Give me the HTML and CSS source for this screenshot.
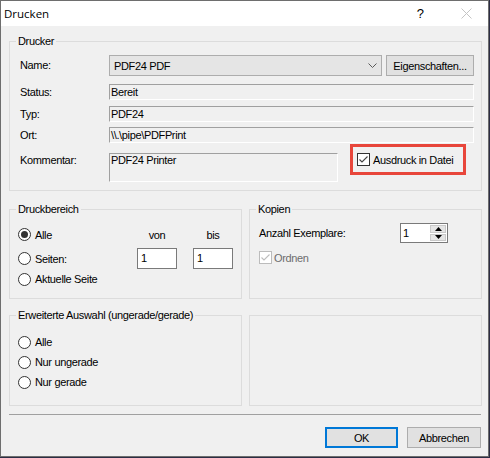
FILE: index.html
```html
<!DOCTYPE html>
<html lang="de">
<head>
<meta charset="utf-8">
<title>Drucken</title>
<link rel="stylesheet" href="styles.css">
</head>
<body>
<div class="window">
  <div class="titlebar">
    <span class="title">Drucken</span>
    <span class="help">?</span>
    <svg class="close" width="11" height="11" viewBox="0 0 11 11">
      <path d="M0.5 0.5 L10.5 10.5 M10.5 0.5 L0.5 10.5" stroke="#c4c4c4" stroke-width="1" fill="none"/>
    </svg>
  </div>

  <div class="client">
    <fieldset class="group printer">
      <legend>Drucker</legend>
      <div class="printer-body">
        <div class="row row-name">
          <span class="lbl">Name:</span>
          <div class="combo">
            <span class="combo-text">PDF24 PDF</span>
            <svg class="chevron" width="9" height="5" viewBox="0 0 9 5">
              <path d="M0.5 0.5 L4.5 4.5 L8.5 0.5" stroke="#5a5a5a" stroke-width="1" fill="none"/>
            </svg>
          </div>
          <button class="btn props">Eigenschaften...</button>
        </div>
        <div class="row row-status">
          <span class="lbl">Status:</span>
          <div class="field">Bereit</div>
        </div>
        <div class="row row-type">
          <span class="lbl">Typ:</span>
          <div class="field">PDF24</div>
        </div>
        <div class="row row-where">
          <span class="lbl">Ort:</span>
          <div class="field">\\.\pipe\PDFPrint</div>
        </div>
        <div class="row row-comment">
          <span class="lbl lbl-comment">Kommentar:</span>
          <div class="field comment">PDF24 Printer</div>
          <div class="highlight">
            <span class="check">
              <svg width="11" height="11" viewBox="0 0 11 11"><path d="M1.5 5.5 L4 8 L9.5 2.5" stroke="#444" stroke-width="1.1" fill="none"/></svg>
            </span>
            <span>Ausdruck in Datei</span>
          </div>
        </div>
      </div>
    </fieldset>

    <div class="group-row row-mid">
      <fieldset class="group range">
        <legend>Druckbereich</legend>
        <div class="range-body">
          <span class="radio"><span class="dot on"></span>Alle</span>
          <span class="col-head">von</span>
          <span class="col-head">bis</span>
          <span class="radio end"><span class="dot"></span>Seiten:</span>
          <span class="num end">1</span>
          <span class="num end">1</span>
          <span class="radio"><span class="dot"></span>Aktuelle Seite</span>
        </div>
      </fieldset>
      <fieldset class="group copies">
        <legend>Kopien</legend>
        <div class="copies-body">
          <div class="copies-row">
            <span class="copies-lbl">Anzahl Exemplare:</span>
            <div class="spin">
              <span class="spin-val">1</span>
              <span class="spin-btns">
                <span class="spin-btn"><svg width="7" height="4" viewBox="0 0 7 4"><path d="M3.5 0 L7 4 L0 4 Z" fill="#000"/></svg></span>
                <span class="spin-btn"><svg width="7" height="4" viewBox="0 0 7 4"><path d="M0 0 L7 0 L3.5 4 Z" fill="#000"/></svg></span>
              </span>
            </div>
          </div>
          <div class="collate">
            <span class="check disabled">
              <svg width="11" height="11" viewBox="0 0 11 11"><path d="M1.5 5.5 L4 8 L9.5 2.5" stroke="#bdbdbd" stroke-width="1.1" fill="none"/></svg>
            </span>
            <span>Ordnen</span>
          </div>
        </div>
      </fieldset>
    </div>

    <div class="group-row row-low">
      <fieldset class="group parity">
        <legend>Erweiterte Auswahl (ungerade/gerade)</legend>
        <div class="parity-body">
          <span class="radio"><span class="dot"></span>Alle</span>
          <span class="radio"><span class="dot"></span>Nur ungerade</span>
          <span class="radio"><span class="dot"></span>Nur gerade</span>
        </div>
      </fieldset>
      <fieldset class="group blank"></fieldset>
    </div>

    <div class="separator"></div>

    <div class="buttons">
      <button class="btn default">OK</button>
      <button class="btn cancel">Abbrechen</button>
    </div>
  </div>
</div>
</body>
</html>
```

FILE: styles.css
```css
html, body {
  margin: 0;
  padding: 0;
}

body {
  width: 490px;
  height: 458px;
  overflow: hidden;
  background: #2c2d44;
  font-family: "Liberation Sans", Arial, sans-serif;
  font-size: 11px;
  letter-spacing: -0.35px;
  color: #000;
}

.window {
  width: 489px;
  height: 457px;
  box-sizing: border-box;
  border: 1px solid #6e6e6e;
  background: #f0f0f0;
  display: flex;
  flex-direction: column;
  overflow: hidden;
}

/* title bar */
.titlebar {
  height: 25px;
  flex: none;
  background: #fff;
  display: flex;
  align-items: center;
  padding-left: 3px;
}

.title {
  flex: 1;
  font-family: "Segoe UI", "Open Sans", "Noto Sans", sans-serif;
  font-size: 11.5px;
  letter-spacing: 0;
}

.help {
  font-family: "Segoe UI", "Liberation Sans", sans-serif;
  font-size: 13px;
  letter-spacing: 0;
  margin-right: 37px;
}

.close {
  margin-right: 16px;
  display: block;
}

/* client area */
.client {
  flex: 1;
  padding: 0 6px 0 8px;
  display: flex;
  flex-direction: column;
}

fieldset.group {
  margin: 0;
  padding: 0;
  border: 1px solid #dcdcdc;
  min-width: 0;
  flex: none;
}

fieldset.group legend {
  margin-left: 6px;
  padding: 0 2px;
  line-height: 13px;
  height: 13px;
}

/* printer group */
fieldset.printer {
  margin-top: 9px;
}

.printer-body {
  padding: 7px 7px 8px 10px;
  display: flex;
  flex-direction: column;
}

.row {
  display: flex;
  align-items: center;
}

.lbl {
  width: 89px;
  flex: none;
  line-height: 13px;
}

.row-name {
  height: 21px;
}

.combo {
  width: 273px;
  height: 21px;
  box-sizing: border-box;
  border: 1px solid #adadad;
  background: #e5e5e5;
  display: flex;
  align-items: center;
  padding-left: 4px;
  margin-right: 4px;
}

.combo-text {
  flex: 1;
}

.chevron {
  display: block;
  margin-right: 4px;
}

.btn {
  font: inherit;
  letter-spacing: inherit;
  color: #000;
  height: 21px;
  box-sizing: border-box;
  border: 1px solid #adadad;
  background: #e1e1e1;
  padding: 0;
  margin: 0;
  text-align: center;
}

.props {
  width: 88px;
}

.field {
  flex: 1;
  height: 16px;
  box-sizing: border-box;
  border-top: 1px solid #a0a0a0;
  border-left: 1px solid #a0a0a0;
  border-right: 1px solid #fff;
  border-bottom: 1px solid #fff;
  line-height: 14px;
  padding-left: 1px;
  white-space: nowrap;
}

.row-status { margin-top: 8px; }
.row-type { margin-top: 6px; }
.row-where { margin-top: 5px; }

.row-comment {
  margin-top: 1px;
  align-items: flex-start;
}

.lbl-comment {
  margin-top: 10px;
}

.field.comment {
  flex: none;
  width: 229px;
  height: 29px;
  margin-top: 9px;
  line-height: 13px;
}

.highlight {
  width: 116px;
  height: 31px;
  box-sizing: border-box;
  border: 3px solid #e8463b;
  margin-left: 12px;
  display: flex;
  align-items: center;
  padding-left: 4px;
  gap: 3px;
}

.check {
  width: 13px;
  height: 13px;
  box-sizing: border-box;
  border: 1px solid #333;
  background: #fff;
  flex: none;
  display: flex;
}

.check svg {
  display: block;
}

.check.disabled {
  border-color: #bcbcbc;
}

/* middle and lower rows */
.group-row {
  display: flex;
  gap: 7px;
  flex: none;
}

.group-row > fieldset {
  flex: 1;
}

.row-mid { margin-top: 12px; }
.row-low { margin-top: 10px; }

.range-body {
  padding: 8px 8px 9px 8px;
  display: grid;
  grid-template-columns: 103px 40px 40px;
  grid-template-rows: 21px 24px 20px;
  column-gap: 16px;
}

.radio {
  display: flex;
  align-items: center;
  gap: 4px;
  white-space: nowrap;
}

.radio.end,
.num.end {
  align-self: end;
}

.dot {
  width: 13px;
  height: 13px;
  box-sizing: border-box;
  border: 1px solid #333;
  border-radius: 50%;
  background: #fff;
  flex: none;
  display: flex;
  align-items: center;
  justify-content: center;
}

.dot.on::after {
  content: "";
  width: 7px;
  height: 7px;
  border-radius: 50%;
  background: #333;
}

.col-head {
  align-self: center;
  text-align: center;
}

.num {
  height: 21px;
  box-sizing: border-box;
  border: 1px solid #7a7a7a;
  background: #fff;
  padding-left: 3px;
  line-height: 19px;
}

.radio.end {
  height: 21px;
}

/* copies group */
.copies-body {
  padding: 7px 9px 0 9px;
}

.copies-row {
  display: flex;
  align-items: center;
  height: 20px;
}

.copies-lbl {
  width: 141px;
  flex: none;
}

.spin {
  width: 48px;
  height: 20px;
  box-sizing: border-box;
  border: 1px solid #7a7a7a;
  background: #fff;
  display: flex;
}

.spin-val {
  flex: 1;
  padding-left: 2px;
  line-height: 18px;
}

.spin-btns {
  width: 16px;
  display: flex;
  flex-direction: column;
  gap: 1px;
  padding: 1px 1px 1px 0;
  background: #fff;
}

.spin-btn {
  flex: 1;
  background: #e5e5e5;
  border: 1px solid #c9c9c9;
  display: flex;
  align-items: center;
  justify-content: center;
}

.spin-btn svg {
  display: block;
}

.collate {
  margin-top: 8px;
  display: flex;
  align-items: center;
  gap: 2px;
  color: #6d6d6d;
  height: 13px;
}

/* odd / even group */
.parity-body {
  padding: 10px 8px 13px 8px;
  display: flex;
  flex-direction: column;
}

.parity-body .radio {
  height: 20px;
}

fieldset.blank {
  margin-top: 6px;
}

/* footer */
.separator {
  margin-top: 8px;
  height: 1px;
  flex: none;
  background: #a0a0a0;
  margin-right: 1px;
}

.buttons {
  margin-top: 12px;
  display: flex;
  justify-content: flex-end;
  gap: 9px;
  padding-right: 1px;
  flex: none;
}

.btn.default {
  width: 73px;
  border: 2px solid #0078d7;
}

.btn.cancel {
  width: 74px;
}
```
